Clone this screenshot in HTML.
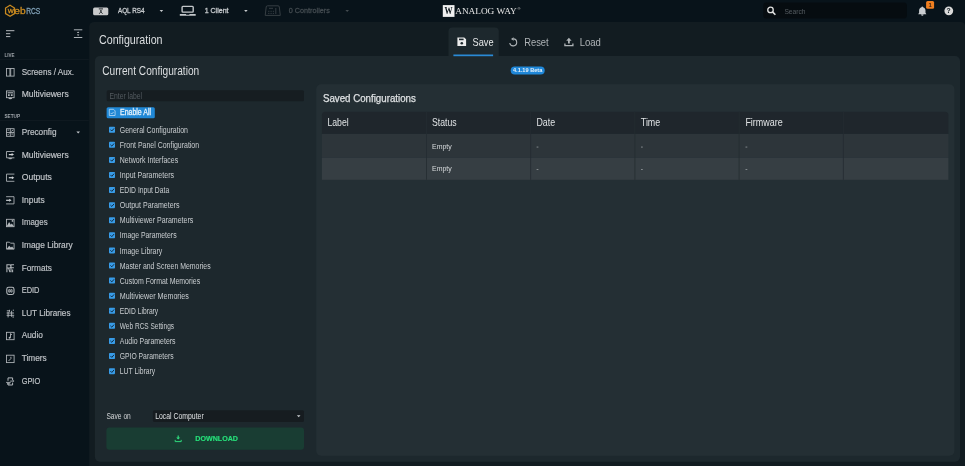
<!DOCTYPE html><html><head><meta charset="utf-8"><style>html,body{margin:0;padding:0;background:#08131a;overflow:hidden;width:965px;height:466px}svg{display:block;will-change:transform}</style></head><body><svg width="965" height="466" viewBox="0 0 965 466" font-family='"Liberation Sans", sans-serif'><rect x="0.00" y="0.00" width="965.00" height="466.00" rx="0" fill="#08131a" />
<path d="M89.2 470 V26.9 a5 5 0 0 1 5 -5 H960.5 a5 5 0 0 1 5 5 V470 Z" fill="#121c21"/>
<rect x="94.90" y="56.00" width="865.10" height="405.80" rx="5" fill="#1d282d" />
<path d="M448.5 56 V31.5 a4 4 0 0 1 4 -4 H494.8 a4 4 0 0 1 4 4 V56 Z" fill="#1d282d"/>
<rect x="316.20" y="84.30" width="638.20" height="371.40" rx="5" fill="#242f34" />
<path d="M10.05 5.3 L14.55 8.05 L14.55 13.55 L10.05 16.3 L5.55 13.55 L5.55 8.05 Z" fill="none" stroke="#c98a20" stroke-width="1.25"/>
<text x="7.80" y="12.95" font-size="6.1" fill="#c98a20" textLength="6" lengthAdjust="spacingAndGlyphs" stroke="#c98a20" stroke-width="0.35">W</text>
<text x="14.30" y="13.75" font-size="8.6" fill="#c98a20" textLength="11.3" lengthAdjust="spacingAndGlyphs" stroke="#c98a20" stroke-width="0.3">eb</text>
<text x="26.15" y="13.75" font-size="8.6" fill="#7f9fb5" textLength="14.1" lengthAdjust="spacingAndGlyphs" stroke="#7f9fb5" stroke-width="0.3">RCS</text>
<rect x="93.10" y="7.40" width="15.20" height="7.90" rx="1.5" fill="#c9cacb" />
<path d="M98.8 8.9 h4.2" stroke="#23292d" stroke-width="1.0"/><circle cx="100.9" cy="10.9" r="0.9" fill="#23292d"/><path d="M99.2 13.8 l1.7 -2 l1.7 2" stroke="#23292d" stroke-width="0.9" fill="none"/>
<text x="117.90" y="13.30" font-size="7.5" fill="#c6cacd" textLength="26.6" lengthAdjust="spacingAndGlyphs" stroke="#c6cacd" stroke-width="0.3">AQL RS4</text>
<path d="M159.6 9.9 h3.6 l-1.8 2.1 z" fill="#c6cacd"/>
<rect x="182.1" y="6.4" width="11.1" height="5.7" rx="0.8" fill="none" stroke="#c3c7ca" stroke-width="1.4"/>
<path d="M179.8 14.0 h6.3 v0.7 h3.3 v-0.7 h6.3 v1.7 h-15.9 z" fill="#c3c7ca"/>
<text x="204.70" y="13.30" font-size="7.5" fill="#c6cacd" textLength="23.8" lengthAdjust="spacingAndGlyphs" stroke="#c6cacd" stroke-width="0.3">1 Client</text>
<path d="M244.1 9.9 h3.6 l-1.8 2.1 z" fill="#c6cacd"/>
<path d="M265.2 15.4 l1.0 -8.4 a1.3 1.3 0 0 1 1.3 -1.2 h10.5 a1.3 1.3 0 0 1 1.3 1.2 l1.0 8.4 z" fill="none" stroke="#363e43" stroke-width="1"/>
<path d="M269 8.3 h4 M268.2 11.3 h1.2 M270.5 11.3 h1.2 M272.8 11.3 h1.2 M268.2 13.4 h1.2 M270.5 13.4 h1.2 M272.8 13.4 h1.2 M275.8 8 v6" stroke="#363e43" stroke-width="1"/>
<text x="288.80" y="13.30" font-size="7.5" fill="#424a4f" textLength="41" lengthAdjust="spacingAndGlyphs" stroke="#424a4f" stroke-width="0.3">0 Controllers</text>
<path d="M345.4 9.9 h3.6 l-1.8 2.1 z" fill="#424a4f"/>
<rect x="442.80" y="5.10" width="11.70" height="11.80" rx="0" fill="#f0f0f0" />
<text x="444.60" y="14.20" font-size="10.0" fill="#0a141a" font-weight="bold" font-family='"Liberation Serif", serif' textLength="8.1" lengthAdjust="spacingAndGlyphs" >W</text>
<text x="455.20" y="14.25" font-size="8.9" fill="#e6e6e6" font-family='"Liberation Serif", serif' textLength="61.5" lengthAdjust="spacingAndGlyphs" >ANALOG WAY</text>
<text x="517.60" y="10.20" font-size="4.0" fill="#d0d0d0" >®</text>
<rect x="763.30" y="2.60" width="143.60" height="15.90" rx="3" fill="#060c10" />
<circle cx="770.5" cy="9.9" r="2.75" fill="none" stroke="#e0e0e0" stroke-width="1.3"/><path d="M772.5 11.9 L775.4 14.8" stroke="#e0e0e0" stroke-width="1.6"/>
<text x="784.40" y="13.60" font-size="7.3" fill="#555c61" textLength="21.2" lengthAdjust="spacingAndGlyphs" >Search</text>
<path d="M922.3 6.5 c-0.5 0 -0.8 0.4 -0.8 0.8 c-1.5 0.4 -2.4 1.7 -2.4 3.3 v2.2 l-0.9 1.4 h8.2 l-0.9 -1.4 v-2.2 c0 -1.6 -0.9 -2.9 -2.4 -3.3 c0 -0.4 -0.3 -0.8 -0.8 -0.8 z M921.1 14.6 a1.2 1.2 0 0 0 2.4 0 z" fill="#c9cdd0"/>
<rect x="926.10" y="0.90" width="8.00" height="7.90" rx="1.5" fill="#f07f20" />
<text x="928.50" y="7.30" font-size="6.0" fill="#3a2410" font-weight="bold" >1</text>
<circle cx="948.8" cy="10.8" r="4.4" fill="#d9d9d9"/>
<text x="946.50" y="13.40" font-size="6.8" fill="#0a141a" font-weight="bold" >?</text>
<path d="M6 30.7 h8.4 M6 33.7 h4.3 M6 36.6 h4.3" stroke="#c8ccd0" stroke-width="0.9"/>
<path d="M73.9 29.8 h8.4 M73.9 37.5 h8.4" stroke="#c0c4c8" stroke-width="0.9"/><path d="M78.1 31.4 l1.2 1.5 h-2.4 z M78.1 36 l1.2 -1.5 h-2.4 z" fill="#c0c4c8"/>
<text x="4.40" y="57.30" font-size="4.6" fill="#a0a6ab" font-weight="bold" textLength="10.1" lengthAdjust="spacingAndGlyphs" >LIVE</text>
<rect x="0.00" y="59.00" width="88.80" height="0.80" rx="0" fill="#121c22" />
<text x="4.50" y="117.90" font-size="4.6" fill="#a0a6ab" font-weight="bold" textLength="15.5" lengthAdjust="spacingAndGlyphs" >SETUP</text>
<rect x="0.00" y="120.00" width="88.80" height="0.80" rx="0" fill="#121c22" />
<text x="21.70" y="74.65" font-size="8.7" fill="#bfc3c7" textLength="52.3" lengthAdjust="spacingAndGlyphs" stroke="#bfc3c7" stroke-width="0.18">Screens / Aux.</text>
<rect x="6.5" y="68.50000000000001" width="7.6" height="7.6" stroke="#b3b8bc" stroke-width="0.85" fill="none"/><path d="M9.9 68.50000000000001 v7.6 M10.7 68.50000000000001 v7.6" stroke="#b3b8bc" stroke-width="0.85" fill="none"/>
<text x="21.70" y="97.25" font-size="8.7" fill="#bfc3c7" textLength="47.0" lengthAdjust="spacingAndGlyphs" stroke="#bfc3c7" stroke-width="0.18">Multiviewers</text>
<rect x="6.5" y="90.9" width="7.6" height="6.8" stroke="#b3b8bc" stroke-width="0.85" fill="none"/><path d="M7.6 92.80000000000001 h5.4" stroke="#b3b8bc" stroke-width="1.1"/><path d="M8 94.30000000000001 h1.7 v1.7 h-1.7z M10.9 94.30000000000001 h1.7 v1.7 h-1.7z" fill="#b3b8bc"/><ellipse cx="10.3" cy="98.5" rx="1.9" ry="0.65" fill="#b3b8bc"/>
<text x="21.70" y="134.95" font-size="8.7" fill="#bfc3c7" textLength="34.8" lengthAdjust="spacingAndGlyphs" stroke="#bfc3c7" stroke-width="0.18">Preconfig</text>
<rect x="6.5" y="128.7" width="7.6" height="7.6" stroke="#b3b8bc" stroke-width="0.85" fill="none"/><path d="M10.3 128.7 v7.6 M6.5 132.5 h7.6 M7.5 130.1 h1.6 M11.2 131.5 l2 -1.6 M7.5 135.2 l1.6 -1.6 M11.3 134.0 h1.8" stroke="#b3b8bc" stroke-width="0.85" fill="none"/>
<text x="21.70" y="157.55" font-size="8.7" fill="#bfc3c7" textLength="47.0" lengthAdjust="spacingAndGlyphs" stroke="#bfc3c7" stroke-width="0.18">Multiviewers</text>
<path d="M14.4 151.50000000000003 h-7.9 v6.3 h7.9" stroke="#b3b8bc" stroke-width="0.85" fill="none"/><path d="M8.8 154.60000000000002 h3.2" stroke="#cfd3d6" stroke-width="1.2"/><path d="M11.6 153.10000000000002 l2.4 1.5 l-2.4 1.5 z" fill="#cfd3d6"/><ellipse cx="10.3" cy="158.60000000000002" rx="2.1" ry="0.65" fill="#b3b8bc"/>
<text x="21.70" y="180.15" font-size="8.7" fill="#bfc3c7" textLength="30.2" lengthAdjust="spacingAndGlyphs" stroke="#bfc3c7" stroke-width="0.18">Outputs</text>
<path d="M14.4 174.10000000000002 h-7.9 v7.2 h7.9" stroke="#b3b8bc" stroke-width="0.85" fill="none"/><path d="M8.8 177.70000000000002 h3.4" stroke="#cfd3d6" stroke-width="1.2"/><path d="M11.9 176.20000000000002 l2.4 1.5 l-2.4 1.5 z" fill="#cfd3d6"/>
<text x="21.70" y="202.75" font-size="8.7" fill="#bfc3c7" textLength="23.0" lengthAdjust="spacingAndGlyphs" stroke="#bfc3c7" stroke-width="0.18">Inputs</text>
<path d="M6.1 196.70000000000002 h7.9 v7.2 h-7.9" stroke="#b3b8bc" stroke-width="0.85" fill="none"/><path d="M6.1 200.3 h3.4" stroke="#cfd3d6" stroke-width="1.2"/><path d="M9.2 198.8 l2.4 1.5 l-2.4 1.5 z" fill="#cfd3d6"/>
<text x="21.70" y="225.35" font-size="8.7" fill="#bfc3c7" textLength="25.900000000000002" lengthAdjust="spacingAndGlyphs" stroke="#bfc3c7" stroke-width="0.18">Images</text>
<rect x="6.5" y="219.3" width="7.6" height="7.4" stroke="#b3b8bc" stroke-width="0.85" fill="none"/><path d="M6.6 226.6 l2.5 -4.6 l1.7 2.7 l1 -1.2 l2.3 3.1 z" fill="#b3b8bc"/><circle cx="12.5" cy="220.9" r="0.9" fill="#b3b8bc"/>
<text x="21.70" y="247.95" font-size="8.7" fill="#bfc3c7" textLength="51.0" lengthAdjust="spacingAndGlyphs" stroke="#bfc3c7" stroke-width="0.18">Image Library</text>
<path d="M6.5 249.2 v-7 h3 l1 1 h3.6 v6 z" stroke="#b3b8bc" stroke-width="0.85" fill="none"/><path d="M6.8 249.0 l2.3 -3.2 l1.8 1.7 l1.2 -0.9 l1.9 2.4 z" fill="#b3b8bc"/>
<text x="21.70" y="270.55" font-size="8.7" fill="#bfc3c7" textLength="30.2" lengthAdjust="spacingAndGlyphs" stroke="#bfc3c7" stroke-width="0.18">Formats</text>
<path d="M6.9 272.2 v-7.4 h2.4 a1.5 1.5 0 0 1 0 3.2 h-2.4 M8.6 268.0 l1.3 4.2 M11 272.2 v-7.4 h3 M11 267.8 h2.9 M12.6 269.59999999999997 v2.6" stroke="#b3b8bc" stroke-width="1.05" fill="none"/>
<text x="21.70" y="293.15" font-size="8.7" fill="#bfc3c7" textLength="17.8" lengthAdjust="spacingAndGlyphs" stroke="#bfc3c7" stroke-width="0.18">EDID</text>
<rect x="6.8" y="287.29999999999995" width="7.2" height="7.2" rx="1.9" stroke="#b3b8bc" stroke-width="1.1" fill="none"/><path d="M8.7 289.69999999999993 h1.3 v2.4 h-1.3z M10.8 289.69999999999993 h1.3 v2.4 h-1.3z" stroke="#b3b8bc" stroke-width="0.85" fill="none"/>
<text x="21.70" y="315.95" font-size="8.7" fill="#bfc3c7" textLength="48.8" lengthAdjust="spacingAndGlyphs" stroke="#bfc3c7" stroke-width="0.18">LUT Libraries</text>
<path d="M6.8 310.79999999999995 h2.6 M9.5 309.79999999999995 v2 M6.6 312.99999999999994 h7.4 M8.1 311.79999999999995 v5.6 M11.6 310.79999999999995 v6 M6.6 315.29999999999995 h7.6 M12.4 316.99999999999994 h1.6 M12.8 310.2 h1.2" stroke="#b3b8bc" stroke-width="0.9" fill="none"/>
<text x="21.70" y="338.35" font-size="8.7" fill="#bfc3c7" textLength="21.2" lengthAdjust="spacingAndGlyphs" stroke="#bfc3c7" stroke-width="0.18">Audio</text>
<rect x="6.5" y="332.3" width="7.6" height="7.4" stroke="#b3b8bc" stroke-width="0.85" fill="none"/><path d="M10.5 333.6 v4.2 M10.5 333.6 l1.5 1.2" stroke="#b3b8bc" stroke-width="0.9" fill="none"/><circle cx="9.6" cy="337.8" r="1.0" fill="#b3b8bc"/>
<text x="21.70" y="361.05" font-size="8.7" fill="#bfc3c7" textLength="25.0" lengthAdjust="spacingAndGlyphs" stroke="#bfc3c7" stroke-width="0.18">Timers</text>
<rect x="6.5" y="355.2" width="7.6" height="7.4" stroke="#b3b8bc" stroke-width="0.85" fill="none"/><path d="M8.5 361.0 l2.4 -2.4 v-1.8" stroke="#b3b8bc" stroke-width="0.9" fill="none"/>
<text x="21.70" y="383.75" font-size="8.7" fill="#bfc3c7" textLength="18.5" lengthAdjust="spacingAndGlyphs" stroke="#bfc3c7" stroke-width="0.18">GPIO</text>
<path d="M8 377.9 h4.6 v2.4 M12.6 382.59999999999997 v2.4 h-4.6 v-2 M8 380.79999999999995 v-2.9" stroke="#b3b8bc" stroke-width="1" fill="none"/><path d="M10.2 381.09999999999997 h3 M6.1 382.4 h4.6 M7.0 383.79999999999995 h3.2" stroke="#b3b8bc" stroke-width="0.9"/><path d="M13 380.09999999999997 l1.4 1 l-1.4 1 z" fill="#b3b8bc"/>
<path d="M76.4 131.4 h3.6 l-1.8 2.2 z" fill="#c3c7cb"/>
<text x="99.00" y="43.60" font-size="12.4" fill="#dcdfe1" textLength="63.5" lengthAdjust="spacingAndGlyphs" >Configuration</text>
<path d="M457.4 37.4 h6.8 l1.9 1.9 v6.8 h-8.7 z" fill="#ececec"/><rect x="459" y="38.6" width="4.6" height="1.6" fill="#1d282d"/><circle cx="461.8" cy="43.2" r="1.3" fill="#1d282d"/>
<text x="472.60" y="45.60" font-size="11.0" fill="#e6e8e9" textLength="21" lengthAdjust="spacingAndGlyphs" >Save</text>
<rect x="453.40" y="54.50" width="39.70" height="1.70" rx="0" fill="#2a8ad6" />
<path d="M513.4 38.9 A3.5 3.5 0 1 1 509.75 43.0" fill="none" stroke="#aeb3b6" stroke-width="1.1"/><path d="M511.0 39.0 l2.6 -1.8 v3.6 z" fill="#aeb3b6"/>
<text x="524.20" y="45.60" font-size="11.0" fill="#aeb3b6" textLength="24.5" lengthAdjust="spacingAndGlyphs" >Reset</text>
<path d="M564.9 43.4 v2.2 h8 v-2.2" fill="none" stroke="#aeb3b6" stroke-width="1.3"/><path d="M568.9 37.8 l2.7 2.9 h-1.8 v2.8 h-1.8 v-2.8 h-1.8 z" fill="#aeb3b6"/>
<text x="579.70" y="45.60" font-size="11.0" fill="#aeb3b6" textLength="21.2" lengthAdjust="spacingAndGlyphs" >Load</text>
<text x="102.20" y="74.60" font-size="12.1" fill="#dcdfe1" textLength="97" lengthAdjust="spacingAndGlyphs" >Current Configuration</text>
<rect x="510.70" y="66.50" width="34.00" height="8.10" rx="4" fill="#1f87d8" />
<text x="513.00" y="72.20" font-size="5.4" fill="#e6f1fa" font-weight="bold" textLength="29.3" lengthAdjust="spacingAndGlyphs" >4.1.19 Beta</text>
<rect x="106.70" y="90.20" width="197.30" height="11.10" rx="1.5" fill="#161d21" />
<text x="109.50" y="98.50" font-size="8.2" fill="#535a5f" textLength="32.5" lengthAdjust="spacingAndGlyphs" >Enter label</text>
<rect x="106.60" y="107.20" width="48.20" height="11.00" rx="1.5" fill="#2088d6" />
<path d="M109.3 109.3 h4.2 l1.6 1.6 v4.6 h-5.8 z" fill="none" stroke="#bcdcf5" stroke-width="0.8"/><path d="M110.6 112.9 l1.1 1.1 l1.9 -2" fill="none" stroke="#bcdcf5" stroke-width="0.8"/>
<text x="120.00" y="114.90" font-size="8.2" fill="#e4f1fb" textLength="31" lengthAdjust="spacingAndGlyphs" stroke="#e4f1fb" stroke-width="0.3">Enable All</text>
<rect x="109.00" y="126.70" width="6.00" height="6.00" rx="0.8" fill="#389ce8" />
<path d="M110.4 129.60 l1.4 1.4 l2.3 -2.6" fill="none" stroke="#0f2030" stroke-width="0.9"/>
<text x="119.80" y="132.80" font-size="8.4" fill="#c9cdd0" textLength="68.2" lengthAdjust="spacingAndGlyphs" >General Configuration</text>
<rect x="109.00" y="141.79" width="6.00" height="6.00" rx="0.8" fill="#389ce8" />
<path d="M110.4 144.69 l1.4 1.4 l2.3 -2.6" fill="none" stroke="#0f2030" stroke-width="0.9"/>
<text x="119.80" y="147.89" font-size="8.4" fill="#c9cdd0" textLength="79.3" lengthAdjust="spacingAndGlyphs" >Front Panel Configuration</text>
<rect x="109.00" y="156.88" width="6.00" height="6.00" rx="0.8" fill="#389ce8" />
<path d="M110.4 159.78 l1.4 1.4 l2.3 -2.6" fill="none" stroke="#0f2030" stroke-width="0.9"/>
<text x="119.80" y="162.98" font-size="8.4" fill="#c9cdd0" textLength="58.4" lengthAdjust="spacingAndGlyphs" >Network Interfaces</text>
<rect x="109.00" y="171.97" width="6.00" height="6.00" rx="0.8" fill="#389ce8" />
<path d="M110.4 174.87 l1.4 1.4 l2.3 -2.6" fill="none" stroke="#0f2030" stroke-width="0.9"/>
<text x="119.80" y="178.07" font-size="8.4" fill="#c9cdd0" textLength="54.3" lengthAdjust="spacingAndGlyphs" >Input Parameters</text>
<rect x="109.00" y="187.06" width="6.00" height="6.00" rx="0.8" fill="#389ce8" />
<path d="M110.4 189.96 l1.4 1.4 l2.3 -2.6" fill="none" stroke="#0f2030" stroke-width="0.9"/>
<text x="119.80" y="193.16" font-size="8.4" fill="#c9cdd0" textLength="49.4" lengthAdjust="spacingAndGlyphs" >EDID Input Data</text>
<rect x="109.00" y="202.15" width="6.00" height="6.00" rx="0.8" fill="#389ce8" />
<path d="M110.4 205.05 l1.4 1.4 l2.3 -2.6" fill="none" stroke="#0f2030" stroke-width="0.9"/>
<text x="119.80" y="208.25" font-size="8.4" fill="#c9cdd0" textLength="59.7" lengthAdjust="spacingAndGlyphs" >Output Parameters</text>
<rect x="109.00" y="217.24" width="6.00" height="6.00" rx="0.8" fill="#389ce8" />
<path d="M110.4 220.14 l1.4 1.4 l2.3 -2.6" fill="none" stroke="#0f2030" stroke-width="0.9"/>
<text x="119.80" y="223.34" font-size="8.4" fill="#c9cdd0" textLength="73.5" lengthAdjust="spacingAndGlyphs" >Multiviewer Parameters</text>
<rect x="109.00" y="232.33" width="6.00" height="6.00" rx="0.8" fill="#389ce8" />
<path d="M110.4 235.23 l1.4 1.4 l2.3 -2.6" fill="none" stroke="#0f2030" stroke-width="0.9"/>
<text x="119.80" y="238.43" font-size="8.4" fill="#c9cdd0" textLength="56.8" lengthAdjust="spacingAndGlyphs" >Image Parameters</text>
<rect x="109.00" y="247.42" width="6.00" height="6.00" rx="0.8" fill="#389ce8" />
<path d="M110.4 250.32 l1.4 1.4 l2.3 -2.6" fill="none" stroke="#0f2030" stroke-width="0.9"/>
<text x="119.80" y="253.52" font-size="8.4" fill="#c9cdd0" textLength="42.4" lengthAdjust="spacingAndGlyphs" >Image Library</text>
<rect x="109.00" y="262.51" width="6.00" height="6.00" rx="0.8" fill="#389ce8" />
<path d="M110.4 265.41 l1.4 1.4 l2.3 -2.6" fill="none" stroke="#0f2030" stroke-width="0.9"/>
<text x="119.80" y="268.61" font-size="8.4" fill="#c9cdd0" textLength="90.8" lengthAdjust="spacingAndGlyphs" >Master and Screen Memories</text>
<rect x="109.00" y="277.60" width="6.00" height="6.00" rx="0.8" fill="#389ce8" />
<path d="M110.4 280.50 l1.4 1.4 l2.3 -2.6" fill="none" stroke="#0f2030" stroke-width="0.9"/>
<text x="119.80" y="283.70" font-size="8.4" fill="#c9cdd0" textLength="80.4" lengthAdjust="spacingAndGlyphs" >Custom Format Memories</text>
<rect x="109.00" y="292.69" width="6.00" height="6.00" rx="0.8" fill="#389ce8" />
<path d="M110.4 295.59 l1.4 1.4 l2.3 -2.6" fill="none" stroke="#0f2030" stroke-width="0.9"/>
<text x="119.80" y="298.79" font-size="8.4" fill="#c9cdd0" textLength="69.1" lengthAdjust="spacingAndGlyphs" >Multiviewer Memories</text>
<rect x="109.00" y="307.78" width="6.00" height="6.00" rx="0.8" fill="#389ce8" />
<path d="M110.4 310.68 l1.4 1.4 l2.3 -2.6" fill="none" stroke="#0f2030" stroke-width="0.9"/>
<text x="119.80" y="313.88" font-size="8.4" fill="#c9cdd0" textLength="38.4" lengthAdjust="spacingAndGlyphs" >EDID Library</text>
<rect x="109.00" y="322.87" width="6.00" height="6.00" rx="0.8" fill="#389ce8" />
<path d="M110.4 325.77 l1.4 1.4 l2.3 -2.6" fill="none" stroke="#0f2030" stroke-width="0.9"/>
<text x="119.80" y="328.97" font-size="8.4" fill="#c9cdd0" textLength="54.3" lengthAdjust="spacingAndGlyphs" >Web RCS Settings</text>
<rect x="109.00" y="337.96" width="6.00" height="6.00" rx="0.8" fill="#389ce8" />
<path d="M110.4 340.86 l1.4 1.4 l2.3 -2.6" fill="none" stroke="#0f2030" stroke-width="0.9"/>
<text x="119.80" y="344.06" font-size="8.4" fill="#c9cdd0" textLength="55.8" lengthAdjust="spacingAndGlyphs" >Audio Parameters</text>
<rect x="109.00" y="353.05" width="6.00" height="6.00" rx="0.8" fill="#389ce8" />
<path d="M110.4 355.95 l1.4 1.4 l2.3 -2.6" fill="none" stroke="#0f2030" stroke-width="0.9"/>
<text x="119.80" y="359.15" font-size="8.4" fill="#c9cdd0" textLength="53.8" lengthAdjust="spacingAndGlyphs" >GPIO Parameters</text>
<rect x="109.00" y="368.14" width="6.00" height="6.00" rx="0.8" fill="#389ce8" />
<path d="M110.4 371.04 l1.4 1.4 l2.3 -2.6" fill="none" stroke="#0f2030" stroke-width="0.9"/>
<text x="119.80" y="374.24" font-size="8.4" fill="#c9cdd0" textLength="35.4" lengthAdjust="spacingAndGlyphs" >LUT Library</text>
<text x="106.40" y="418.60" font-size="8.3" fill="#d2d5d7" textLength="24.4" lengthAdjust="spacingAndGlyphs" >Save on</text>
<rect x="152.90" y="410.30" width="151.10" height="11.80" rx="1.5" fill="#161c20" />
<text x="155.20" y="418.60" font-size="8.3" fill="#dfe1e3" textLength="48.5" lengthAdjust="spacingAndGlyphs" >Local Computer</text>
<path d="M296.9 415.2 h3.6 l-1.8 2 z" fill="#c9cdd0"/>
<rect x="106.40" y="427.40" width="197.60" height="22.40" rx="3" fill="#193d33" />
<path d="M178.2 435.4 v3.6" stroke="#2fd97c" stroke-width="1.2"/><path d="M176.2 437.4 l2 2.1 l2 -2.1 z" fill="#2fd97c"/><path d="M175.2 439.9 v1.7 h6 v-1.7" fill="none" stroke="#2fd97c" stroke-width="1.0"/>
<text x="195.30" y="441.00" font-size="7.6" fill="#26e07a" font-weight="bold" textLength="42.7" lengthAdjust="spacingAndGlyphs" stroke="#26e07a" stroke-width="0.15">DOWNLOAD</text>
<text x="322.90" y="102.20" font-size="10.0" fill="#dde0e2" textLength="93" lengthAdjust="spacingAndGlyphs" stroke="#dde0e2" stroke-width="0.25">Saved Configurations</text>
<path d="M321.9 133.9 V115.3 a3.5 3.5 0 0 1 3.5 -3.5 H944.9 a3.5 3.5 0 0 1 3.5 3.5 V133.9 Z" fill="#1f262c"/>
<rect x="321.90" y="133.90" width="626.50" height="23.60" rx="0" fill="#2d353a" />
<rect x="321.90" y="157.70" width="626.50" height="22.10" rx="0" fill="#363e43" />
<rect x="426.10" y="111.80" width="0.80" height="68.00" rx="0" fill="#242c31" />
<rect x="530.30" y="111.80" width="0.80" height="68.00" rx="0" fill="#242c31" />
<rect x="634.50" y="111.80" width="0.80" height="68.00" rx="0" fill="#242c31" />
<rect x="738.70" y="111.80" width="0.80" height="68.00" rx="0" fill="#242c31" />
<rect x="842.90" y="111.80" width="0.80" height="68.00" rx="0" fill="#242c31" />
<text x="327.40" y="125.80" font-size="10.4" fill="#e0e3e5" textLength="21.3" lengthAdjust="spacingAndGlyphs" >Label</text>
<text x="432.00" y="125.80" font-size="10.4" fill="#e0e3e5" textLength="24.6" lengthAdjust="spacingAndGlyphs" >Status</text>
<text x="536.40" y="125.80" font-size="10.4" fill="#e0e3e5" textLength="18.7" lengthAdjust="spacingAndGlyphs" >Date</text>
<text x="640.80" y="125.80" font-size="10.4" fill="#e0e3e5" textLength="19.4" lengthAdjust="spacingAndGlyphs" >Time</text>
<text x="745.40" y="125.80" font-size="10.4" fill="#e0e3e5" textLength="37.3" lengthAdjust="spacingAndGlyphs" >Firmware</text>
<text x="432.00" y="148.90" font-size="7.5" fill="#d8dbdd" textLength="19.7" lengthAdjust="spacingAndGlyphs" >Empty</text>
<rect x="536.60" y="146.70" width="1.80" height="0.70" rx="0" fill="#a4a9ad" />
<rect x="641.00" y="146.70" width="1.80" height="0.70" rx="0" fill="#a4a9ad" />
<rect x="745.50" y="146.70" width="1.80" height="0.70" rx="0" fill="#a4a9ad" />
<text x="432.00" y="171.40" font-size="7.5" fill="#d8dbdd" textLength="19.7" lengthAdjust="spacingAndGlyphs" >Empty</text>
<rect x="536.60" y="169.20" width="1.80" height="0.70" rx="0" fill="#a4a9ad" />
<rect x="641.00" y="169.20" width="1.80" height="0.70" rx="0" fill="#a4a9ad" />
<rect x="745.50" y="169.20" width="1.80" height="0.70" rx="0" fill="#a4a9ad" /></svg></body></html>
